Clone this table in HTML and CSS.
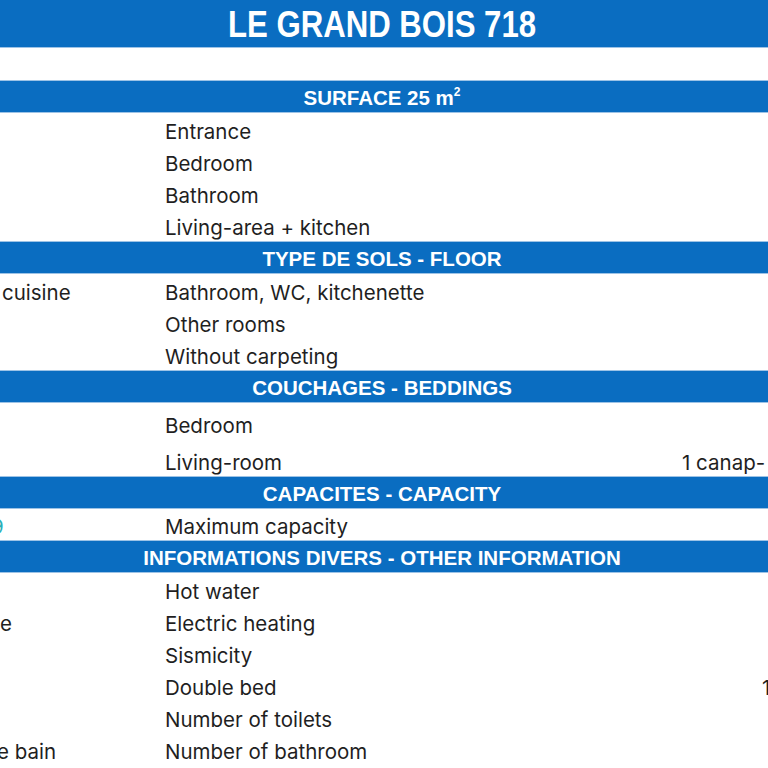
FILE: index.html
```html
<!DOCTYPE html>
<html lang="fr">
<head>
<meta charset="utf-8">
<title>LE GRAND BOIS 718</title>
<link rel="stylesheet" href="styles.css">
</head>
<body>
<div class="sheet">
  <div class="title"><span class="title-text">LE GRAND BOIS 718</span></div>
  <div class="blank"></div>

  <div class="bar">SURFACE 25 m<sup>2</sup></div>
  <div class="row"><div class="c1"></div><div class="c2">Entrance</div><div class="c3"></div></div>
  <div class="row"><div class="c1"></div><div class="c2">Bedroom</div><div class="c3"></div></div>
  <div class="row"><div class="c1"></div><div class="c2">Bathroom</div><div class="c3"></div></div>
  <div class="row"><div class="c1"></div><div class="c2">Living-area + kitchen</div><div class="c3"></div></div>

  <div class="bar">TYPE DE SOLS - FLOOR</div>
  <div class="row"><div class="c1 lead">cuisine</div><div class="c2">Bathroom, WC, kitchenette</div><div class="c3"></div></div>
  <div class="row"><div class="c1"></div><div class="c2">Other rooms</div><div class="c3"></div></div>
  <div class="row"><div class="c1"></div><div class="c2">Without carpeting</div><div class="c3"></div></div>

  <div class="bar">COUCHAGES - BEDDINGS</div>
  <div class="row tall"><div class="c1"></div><div class="c2">Bedroom</div><div class="c3"></div></div>
  <div class="row taller"><div class="c1"></div><div class="c2">Living-room</div><div class="c3">1 canap-</div></div>

  <div class="bar">CAPACITES - CAPACITY</div>
  <div class="row short"><div class="c1"><span class="teal">9</span></div><div class="c2">Maximum capacity</div><div class="c3"></div></div>

  <div class="bar">INFORMATIONS DIVERS - OTHER INFORMATION</div>
  <div class="row"><div class="c1"></div><div class="c2">Hot water</div><div class="c3"></div></div>
  <div class="row"><div class="c1">e</div><div class="c2">Electric heating</div><div class="c3"></div></div>
  <div class="row"><div class="c1"></div><div class="c2">Sismicity</div><div class="c3"></div></div>
  <div class="row"><div class="c1"></div><div class="c2">Double bed</div><div class="c3 far">1</div></div>
  <div class="row"><div class="c1"></div><div class="c2">Number of toilets</div><div class="c3"></div></div>
  <div class="row"><div class="c1 cut">e bain</div><div class="c2">Number of bathroom</div><div class="c3"></div></div>
</div>
</body>
</html>
```

FILE: styles.css
```css
html, body {
  margin: 0;
  padding: 0;
  background: #ffffff;
  overflow: hidden;
}

.sheet {
  width: 768px;
  height: 768px;
  overflow: hidden;
  font-family: "Inter", "Noto Sans", sans-serif;
  font-size: 20.5px;
  color: #1f1f1f;
  white-space: nowrap;
}

.title {
  height: 47px;
  border-bottom: 1px solid #9dc3e6;
  background: #0a6dc1;
  color: #ffffff;
  text-align: center;
  padding-right: 4px;
  line-height: 49px;
}

.title-text {
  display: inline-block;
  font-family: "Liberation Sans", sans-serif;
  font-weight: bold;
  font-size: 36px;
  transform: scaleX(0.865);
}

.blank {
  height: 32px;
}

.bar {
  height: 31px;
  border-top: 1px solid #9dc3e6;
  border-bottom: 1px solid #9dc3e6;
  background: #0a6dc1;
  color: #ffffff;
  font-family: "Liberation Sans", sans-serif;
  font-weight: bold;
  font-size: 20.5px;
  line-height: 33px;
  text-align: center;
  padding-right: 4px;
}

.bar sup {
  font-size: 12px;
  line-height: 0;
  vertical-align: 9px;
}

.row {
  height: 32px;
  display: grid;
  grid-template-columns: 165px 517px 86px;
  align-items: end;
}

.row.tall { height: 36px; }
.row.taller { height: 37px; }
.row.short { height: 31px; }

.c1, .c2, .c3 {
  overflow: hidden;
  line-height: 24px;
  padding-bottom: 1px;
}

.c1.lead {
  padding-left: 2px;
}

.c3.far {
  padding-left: 80px;
}

.c1.cut {
  text-indent: -3px;
}

.teal {
  display: inline-block;
  margin-left: -9px;
  color: #2ab0b8;
}
```
